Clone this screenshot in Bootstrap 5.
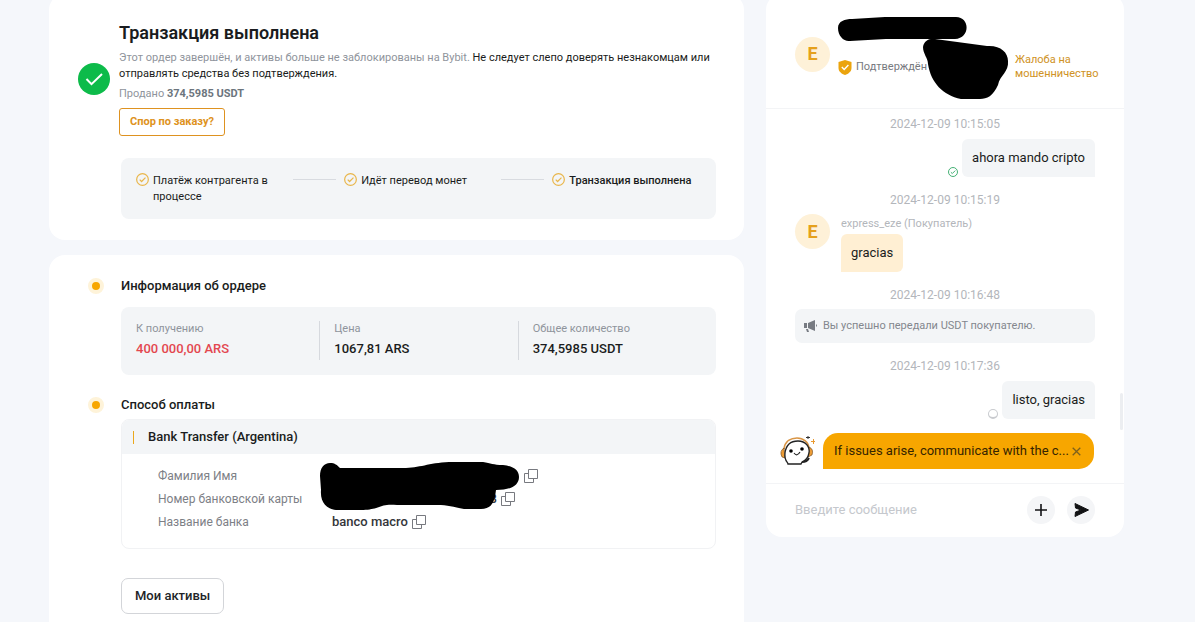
<!DOCTYPE html>
<html lang="ru">
<head>
<meta charset="utf-8">
<meta name="viewport" content="width=device-width, initial-scale=1">
<title>Транзакция выполнена</title>
<link rel="stylesheet" href="https://cdn.jsdelivr.net/npm/bootstrap@5.3.0/dist/css/bootstrap.min.css">
<style>
  :root { --ink:#1a1c20; --soft:#f3f5f7; --muted:#8f949c; --brand:#f7a600; --gold:#de9220; }
  body { background:#f5f7fb; color:var(--ink); font-family:Roboto,"Noto Sans",sans-serif; font-size:13px; line-height:16px; }
  .page-shell { padding:0 71px 0 49px; gap:22px; margin-top:-6px; }
  .panel { background:#fff; border-radius:16px; }
  .panel-rest { border-radius:16px 16px 0 0; }
  .fs-s { font-size:11px; }
  .muted { color:var(--muted); }
  .semi { font-weight:500; }
  .main-col { min-height:calc(100vh + 6px); gap:15px; }
  .result { padding:27px 28px 21px 29px; }
  .result h1 { font-size:18px; line-height:24px; font-weight:600; margin:0 0 5px; }
  .result-copy { margin-left:9px; }
  .btn-dispute { font-size:11px; line-height:16px; font-weight:700; padding:5px 10px; margin-top:6px; color:var(--gold); border:1px solid var(--gold); border-radius:3px; }
  .steps { display:grid; grid-template-columns:7fr 7fr 5fr; margin:22px 0 0 43px; padding:15px 15px 14px; background:var(--soft); border-radius:8px; list-style:none; }
  .steps li { display:flex; gap:4px; }
  .steps svg { flex:none; color:#e9b64b; }
  .step-text { flex:1; }
  .steps .step-line { flex:none; width:43px; height:1px; background:#d8dbe0; margin:6px 8px 0 16px; }
  .order { padding:23px 28px 0 39px; }
  .order h2 { font-size:13px; line-height:16px; font-weight:500; margin:0 0 0 17px; }
  .dot { width:16px; height:16px; border-radius:50%; border:4px solid #fef3d9; background:var(--brand); flex:none; }
  .order-indent { margin-left:33px; }
  .sums { background:var(--soft); border-radius:8px; padding:14px 0 15px; margin-top:13px; margin-bottom:22px; }
  .sums > div { padding:0 14px; height:39px; border-left:1px solid #d6d9de; }
  .sums > div:first-child { border-color:transparent; }
  .sum-due { color:#e3474f; }
  .pay { border:1px solid #f1f2f4; border-radius:8px; overflow:hidden; margin-top:6px; }
  .pay-head { background:var(--soft); height:34px; padding-left:11px; gap:14px; font-weight:500; }
  .pay-head::before { content:""; flex:none; width:1px; height:13px; background:#eba81c; }
  .pay-body { padding:10px 36px 15px; position:relative; }
  .pay-body dl { display:grid; grid-template-columns:174px 1fr; grid-auto-rows:23px; align-items:center; }
  .pay-body dt { font-size:12px; font-weight:400; color:#7d8086; }
  .pay-body dd { margin:0; display:flex; align-items:center; gap:4px; color:#34363a; font-weight:500; }
  .hidden-name { width:188px; }
  .hidden-card { width:165px; text-align:right; }
  .over { position:absolute; pointer-events:none; }
  .pay-mask { left:197px; top:7px; }
  .plain-btn { border:0; background:none; padding:0; line-height:0; }
  .btn-assets { font-size:13px; line-height:16px; font-weight:500; border:1px solid #d3d5d9; border-radius:7px; padding:9px 13px; color:#222428; margin-top:29px; }
  .chat { width:358px; flex:none; }
  .chat-head { height:115px; flex:none; border-bottom:1px solid #f3f4f6; padding:6px 28px 0 29px; position:relative; }
  .chat-user { color:#777a80; padding:26px 0 0 8px; }
  .report { color:#cf9224; width:81px; line-height:14px; padding-top:26px; }
  .head-mask { left:71px; top:22px; }
  .ava { width:35px; height:35px; border-radius:50%; background:#fef1d8; color:#e5a01c; font-size:18px; font-weight:700; display:flex; align-items:center; justify-content:center; flex:none; }
  .chat-body { padding:7px 29px 14px; position:relative; }
  .stamp { text-align:center; font-size:12px; color:#b3b6bb; margin:15px 0 7px; }
  .stamp:first-child { margin-top:0; }
  .stamp-near { margin-bottom:6px; }
  .bubble { background:var(--soft); border-radius:6px 6px 0 6px; padding:11px 10px; }
  .bubble-in { background:#ffefd3; border-radius:6px 6px 6px 0; width:fit-content; }
  .said-by { margin-left:11px; }
  .nick { color:#b3b6bb; font-size:11px; line-height:20px; }
  .notice { background:var(--soft); border-radius:7px; padding:9px; gap:6px; color:#83878e; }
  .spin { width:10px; height:10px; border:1px solid #c9cbcf; border-bottom-width:2px; border-radius:50%; }
  .tip { background:var(--brand); border-radius:15px 15px 15px 0; height:36px; padding:0 13px 0 11px; color:#352400; }
  .tip-row { margin:14px 1px 0 -15px; gap:8px; }
  .chat-foot { border-top:1px solid #f3f4f6; padding:12px 29px 13px; gap:12px; }
  .chat-foot input { border:0; outline:0; min-width:0; color:var(--ink); padding:0; background:none; }
  .chat-foot input::placeholder { color:#c5c8cd; opacity:1; }
  .round-btn { width:28px; height:28px; border-radius:50%; border:0; background:#f4f5f7; padding:0; display:flex; align-items:center; justify-content:center; flex:none; }
  .thumb { right:1px; top:284px; width:3px; height:37px; background:#eceef1; border-radius:2px; }
</style>
</head>
<body>
<svg class="d-none" aria-hidden="true">
  <symbol id="ring" viewBox="0 0 14 14"><circle cx="7" cy="7" r="6.300" fill="none" stroke="currentColor" stroke-width="1.300"/><path d="M4 7.200l2 2L10.200 5" fill="none" stroke="currentColor" stroke-width="1.300"/></symbol>
  <symbol id="copy" viewBox="0 0 14 14"><path d="M4.500.500h9v9h-9z M4.500 4.500h-4v9h9v-4" fill="none" stroke="#77797f"/></symbol>
</svg>
<div class="page-shell d-flex align-items-start">
  <main class="main-col d-flex flex-column flex-grow-1">
    <section class="panel result">
      <div class="d-flex align-items-center">
        <svg class="flex-shrink-0" width="32" height="32" viewBox="0 0 32 32"><circle cx="16" cy="16" r="16" fill="#0dbb4a"/><path d="M8.500 16l5 5.200L24 11" fill="none" stroke="#fff" stroke-width="2"/></svg>
        <div class="result-copy">
          <h1>Транзакция выполнена</h1>
          <p class="fs-s mb-1"><span class="muted">Этот ордер завершён, и активы больше не заблокированы на Bybit.</span> <span>Не следует слепо доверять незнакомцам или отправлять средства без подтверждения.</span></p>
          <p class="fs-s muted mb-0">Продано <b class="text-secondary">374,5985 USDT</b></p>
          <button class="btn btn-dispute" type="button">Спор по заказу?</button>
        </div>
      </div>
      <ol class="steps fs-s mb-0">
        <li><svg width="13" height="13"><use href="#ring"/></svg><span class="step-text">Платёж контрагента в процессе</span><i class="step-line"></i></li>
        <li><svg width="13" height="13"><use href="#ring"/></svg><span class="step-text">Идёт перевод монет</span><i class="step-line"></i></li>
        <li><svg width="13" height="13"><use href="#ring"/></svg><span class="step-text semi text-nowrap">Транзакция выполнена</span></li>
      </ol>
    </section>
    <section class="panel panel-rest order flex-grow-1">
      <div class="d-flex align-items-center"><span class="dot"></span><h2>Информация об ордере</h2></div>
      <div class="order-indent">
        <div class="sums row row-cols-3 g-0">
          <div><div class="fs-s muted">К получению</div><div class="semi sum-due mt-1">400 000,00 ARS</div></div>
          <div><div class="fs-s muted">Цена</div><div class="semi mt-1">1067,81 ARS</div></div>
          <div><div class="fs-s muted">Общее количество</div><div class="semi mt-1">374,5985 USDT</div></div>
        </div>
      </div>
      <div class="d-flex align-items-center"><span class="dot"></span><h2>Способ оплаты</h2></div>
      <div class="order-indent">
        <div class="pay">
          <div class="pay-head d-flex align-items-center">Bank Transfer (Argentina)</div>
          <div class="pay-body">
            <dl class="mb-0">
              <dt>Фамилия Имя</dt>
              <dd><span class="hidden-name"></span><button class="plain-btn" type="button" aria-label="Копировать имя"><svg width="14" height="14"><use href="#copy"/></svg></button></dd>
              <dt>Номер банковской карты</dt>
              <dd><span class="hidden-card">8</span><button class="plain-btn" type="button" aria-label="Копировать номер"><svg width="14" height="14"><use href="#copy"/></svg></button></dd>
              <dt>Название банка</dt>
              <dd>banco macro<button class="plain-btn" type="button" aria-label="Копировать банк"><svg width="14" height="14"><use href="#copy"/></svg></button></dd>
            </dl>
            <svg class="over pay-mask" width="202" height="50" viewBox="0 0 202 50"><path d="M1 15C1 7 5 2 11 2C16 2 18 4 21 7H84C101 7 109 2 130 1H164C172 2 174 4 184 4C194 5 200 9 200 16C200 25 191 29 177 29L176 36C174 43 171 48 162 48H145C134 46 129 44 118 44H78C60 42 61 49 42 49H17C7 48 1 41 2 29Z"/></svg>
          </div>
        </div>
        <button class="btn btn-assets" type="button">Мои активы</button>
      </div>
    </section>
  </main>

  <aside class="chat panel d-flex flex-column">
    <header class="chat-head d-flex align-items-center">
      <span class="ava">E</span>
      <div class="chat-user d-flex align-items-center fs-s flex-grow-1">
        <svg class="me-1" width="14" height="15" viewBox="0 0 14 15"><path d="M7 0l6.500 2v6c0 3.500-3 5.800-6.500 7C3.500 13.800.500 11.500.500 8V2z" fill="#eba40d"/><path d="M3.800 7l2.400 2.400L10.400 5" fill="none" stroke="#fff" stroke-width="1.400"/></svg>Подтверждён
      </div>
      <a class="report fs-s text-decoration-none" href="#">Жалоба на мошенничество</a>
      <svg class="over head-mask" width="174" height="84" viewBox="0 0 174 84"><path d="M1 12C1 5 8 3 15 3L48 1H118C133 0 134 22 118 23H49L13 25C7 26 1 20 1 12Z"/><path d="M86 31C87 25 92 22 98 23L150 30C163 29 171 36 171 45C172 56 163 59 161 69C156 80 150 83 143 83H124C106 79 94 67 91 48C91 42 86 38 86 31Z"/></svg>
    </header>
    <div class="chat-body flex-grow-1">
      <div class="stamp">2024-12-09 10:15:05</div>
      <div class="d-flex justify-content-end align-items-end">
        <svg class="me-1" width="10" height="10" color="#35aa69"><use href="#ring"/></svg>
        <div class="bubble">ahora mando cripto</div>
      </div>
      <div class="stamp stamp-near">2024-12-09 10:15:19</div>
      <div class="d-flex">
        <span class="ava">E</span>
        <div class="said-by"><div class="nick">express_eze (Покупатель)</div><div class="bubble bubble-in">gracias</div></div>
      </div>
      <div class="stamp stamp-near">2024-12-09 10:16:48</div>
      <div class="notice d-flex align-items-center fs-s">
        <svg width="13" height="12" viewBox="0 0 13 12"><path d="M0 3h3v5H0zM4 3l7-3v11L4 8zM2 9h2l1 3H3zM12 4q2 1.500 0 3z" fill="#777b82"/></svg>Вы успешно передали USDT покупателю.
      </div>
      <div class="stamp">2024-12-09 10:17:36</div>
      <div class="d-flex justify-content-end align-items-end">
        <span class="spin me-1"></span>
        <div class="bubble">listo, gracias</div>
      </div>
      <div class="tip-row d-flex align-items-center">
        <svg class="flex-shrink-0" width="35" height="30" viewBox="0 0 35 30"><path d="M4 13C5 5 11 2 17 2s12 4 12 11" fill="none" stroke="#d99545" stroke-width="1.600"/><path d="M4 12q-5 3-2 9l3 1zM29 11q5 2 3 8l-4 2z" fill="#ed9d36" stroke="#684016" stroke-width=".6"/><path d="M8 28C8 26 4 25 5 17C6 9 11 5 18 5c8 0 12 6 11 12c-1 5-4 8-7 9l-1 2z" fill="#fff" stroke="#222" stroke-width="1.300"/><path d="M22 26q5 0 7-4" stroke="#222" stroke-width="2" fill="none"/><circle cx="11" cy="15" r="1.800"/><circle cx="22" cy="13" r="1.800"/><path d="M14 17q3 4 6-1" fill="none" stroke="#222" stroke-width="1.200"/><path d="M26 1.500h4M28 0v3" stroke="#333"/><path d="M33.500 3v5M31 5.500h4" stroke="#e99a31"/></svg>
        <div class="tip d-flex align-items-center justify-content-between flex-grow-1"><span class="text-nowrap">If issues arise, communicate with the c...</span><button class="plain-btn" type="button" aria-label="Закрыть"><svg width="9" height="9" viewBox="0 0 9 9"><path d="M.7.7l7.600 7.600M8.300.7L.7 8.300" stroke="#7d611c" stroke-width="1.300"/></svg></button></div>
      </div>
      <span class="over thumb"></span>
    </div>
    <form class="chat-foot d-flex align-items-center">
      <input class="flex-grow-1" type="text" placeholder="Введите сообщение" aria-label="Введите сообщение">
      <button class="round-btn" type="button" aria-label="Добавить"><svg width="14" height="14"><path d="M7 1v12M1 7h12" stroke="#121214" stroke-width="1.600"/></svg></button>
      <button class="round-btn" type="button" aria-label="Отправить"><svg width="15" height="14" viewBox="0 0 15 14"><path d="M1 .5L14.500 7L1 13.500L1.500 9L7 7L1.500 5z" fill="#121214" stroke="#121214" stroke-linejoin="round"/></svg></button>
    </form>
  </aside>
</div>
<script src="https://cdn.jsdelivr.net/npm/bootstrap@5.3.0/dist/js/bootstrap.bundle.min.js"></script>
</body>
</html>
